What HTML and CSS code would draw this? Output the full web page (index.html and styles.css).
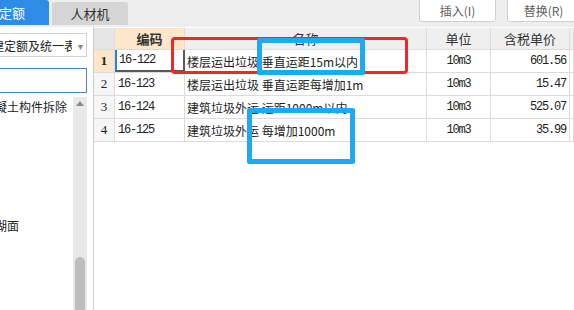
FILE: index.html
```html
<!DOCTYPE html>
<html lang="zh-CN">
<head>
    <meta charset="UTF-8">
    <link rel="stylesheet" href="styles.css">
    <title>定额</title>
</head>
<body>
    <!-- 顶部页签与按钮 -->
    <header class="topbar">
        <div class="tabs">
            <div class="tab tab-active">定额</div>
            <div class="tab">人材机</div>
        </div>
        <div class="actions">
            <button class="btn btn-insert">插入(I)</button>
            <button class="btn btn-replace">替换(R)</button>
        </div>
    </header>

    <div class="content">
        <!-- 左侧定额库 -->
        <aside class="left">
            <div class="select">
                <span class="select-text">建定额及统一表</span>
                <span class="select-arrow">&#9662;</span>
            </div>
            <div class="search"></div>
            <div class="tree">
                <div class="tree-list">
                    <div class="tree-item">混凝土构件拆除</div>
                    <div class="tree-item tree-item-far">水磨石湖面</div>
                </div>
                <div class="scrollbar">
                    <span class="scroll-up"></span>
                    <span class="scroll-thumb"></span>
                </div>
            </div>
        </aside>

        <!-- 定额列表 -->
        <main class="grid">
            <div class="row head">
                <div class="cell num"></div>
                <div class="cell code-head">编码</div>
                <div class="cell">名称</div>
                <div class="cell">单位</div>
                <div class="cell">含税单价</div>
                <div class="cell"></div>
            </div>
            <div class="row current">
                <div class="cell num">1</div>
                <div class="cell code focus">16-122</div>
                <div class="cell name">楼层运出垃圾 垂直运距15m以内</div>
                <div class="cell unit">10m3</div>
                <div class="cell price">601.56</div>
                <div class="cell"></div>
            </div>
            <div class="row">
                <div class="cell num">2</div>
                <div class="cell code">16-123</div>
                <div class="cell name">楼层运出垃圾 垂直运距每增加1m</div>
                <div class="cell unit">10m3</div>
                <div class="cell price">15.47</div>
                <div class="cell"></div>
            </div>
            <div class="row">
                <div class="cell num">3</div>
                <div class="cell code">16-124</div>
                <div class="cell name">建筑垃圾外运 运距1000m以内</div>
                <div class="cell unit">10m3</div>
                <div class="cell price">525.07</div>
                <div class="cell"></div>
            </div>
            <div class="row">
                <div class="cell num">4</div>
                <div class="cell code">16-125</div>
                <div class="cell name">建筑垃圾外运 每增加1000m</div>
                <div class="cell unit">10m3</div>
                <div class="cell price">35.99</div>
                <div class="cell"></div>
            </div>
        </main>
    </div>

    <!-- 标注框 -->
    <div class="mark mark-red"></div>
    <div class="mark mark-blue mark-blue-1"></div>
    <div class="mark mark-blue mark-blue-2"></div>
</body>
</html>
```

FILE: styles.css
```css
/* =======================
   General
======================= */
body {
    margin: 0;
    width: 574px;
    height: 310px;
    overflow: hidden;
    position: relative;
    background: #ffffff;
    font-family: "Noto Sans CJK SC", "Liberation Sans", sans-serif;
    font-size: 12px;
    color: #222;
}

/* =======================
   Top bar
======================= */
.topbar {
    height: 27px;
    background: #eeeeee;
    display: flex;
    justify-content: space-between;
}

.tabs {
    display: flex;
    gap: 3px;
    align-items: flex-end;
    height: 25px;
}

.tab {
    height: 23px;
    width: 76px;
    background: #d5d5d5;
    border-radius: 3px 3px 0 0;
    display: flex;
    align-items: center;
    justify-content: center;
    font-size: 13px;
    color: #333;
}

.tab-active {
    height: 25px;
    width: 49px;
    background: #2f8ce6;
    color: #ffffff;
    justify-content: flex-start;
    text-indent: -1px;
    border-radius: 0 3px 0 0;
}

.actions {
    display: flex;
    gap: 11px;
    margin-right: -6px;
}

.btn {
    margin-top: -3px;
    height: 25px;
    width: 77px;
    background: #ffffff;
    border: 1px solid #cfcfcf;
    border-radius: 3px;
    font-family: "Noto Sans CJK SC", "Liberation Sans", sans-serif;
    font-size: 12px;
    color: #5e5e5e;
    padding: 2px 0 0;
}

.btn-replace {
    width: 73px;
}

/* =======================
   Content
======================= */
.content {
    display: flex;
    height: 283px;
}

.left {
    width: 93px;
    flex: none;
    border-right: 1px solid #cccccc;
    overflow: hidden;
    background: #ffffff;
}

.select {
    margin: 6px 0 0 -4px;
    width: 89px;
    height: 22px;
    border: 1px solid #d2d2d2;
    display: flex;
    align-items: center;
    justify-content: space-between;
    overflow: hidden;
}

.select-text {
    white-space: nowrap;
    overflow: hidden;
    width: 75px;
    text-indent: -5px;
}

.select-arrow {
    color: #888;
    font-size: 10px;
    width: 12px;
    text-align: center;
}

.search {
    margin: 11px 0 0 -4px;
    width: 89px;
    height: 23px;
    border: 1px solid #4a86cf;
}

.tree {
    margin-top: 4px;
    display: flex;
    height: 213px;
}

.tree-list {
    width: 73px;
    overflow: hidden;
    padding-top: 2px;
}

.tree-item {
    white-space: nowrap;
    margin-left: -17px;
    height: 16px;
    line-height: 16px;
    color: #222;
}

.tree-item-far {
    margin-top: 103px;
    margin-left: -41px;
}

.scrollbar {
    width: 14px;
    background: #e8e8e8;
    display: flex;
    flex-direction: column;
    align-items: center;
    justify-content: space-between;
}

.scroll-up {
    margin-top: 4px;
    width: 0;
    height: 0;
    border-left: 4px solid transparent;
    border-right: 4px solid transparent;
    border-bottom: 5px solid #8a8a8a;
}

.scroll-thumb {
    width: 10px;
    height: 53px;
    background: #bdbdbd;
    border-radius: 5px 5px 0 0;
}

/* =======================
   Grid
======================= */
.grid {
    flex: 1;
    padding-top: 1px;
    background: #ffffff;
}

.row {
    display: grid;
    grid-template-columns: 21px 70px 242px 64px 79px 1fr;
    height: 23px;
    border-bottom: 1px solid #dcdcdc;
    box-sizing: border-box;
}

.cell {
    border-right: 1px solid #dcdcdc;
    display: flex;
    align-items: center;
    white-space: nowrap;
    overflow: hidden;
}

.head {
    height: 22px;
    background: #efefef;
    font-size: 13px;
    color: #333;
}

.head .cell {
    justify-content: center;
}

.head .num {
    background: #e6e6e6;
}

.code-head {
    background: #fde6c9;
    font-weight: bold;
}

.num {
    justify-content: center;
    background: #f6f6f6;
    font-family: "Liberation Serif", serif;
    font-size: 13px;
}

.current .num {
    background: #fde6c9;
    font-weight: bold;
}

.code,
.unit,
.price {
    font-family: "Liberation Mono", monospace;
    font-size: 12px;
    letter-spacing: -1.2px;
}

.code {
    padding-left: 3px;
}

.focus {
    border-left: 2px solid #2f7fe0;
    border-right: 2px solid #5a5a5a;
    border-bottom: 2px solid #5a5a5a;
    padding-left: 2px;
}

.name {
    padding-left: 2px;
    font-size: 12px;
}

.unit {
    justify-content: center;
}

.price {
    justify-content: flex-end;
    padding-right: 3px;
}

/* =======================
   Annotation boxes
======================= */
.mark {
    position: absolute;
    box-sizing: border-box;
}

.mark-red {
    left: 171px;
    top: 37px;
    width: 237px;
    height: 37px;
    border: 3px solid #f0262b;
    border-radius: 4px;
}

.mark-blue {
    border: 5px solid #1fa9f2;
    border-radius: 2px;
}

.mark-blue-1 {
    left: 257px;
    top: 38px;
    width: 108px;
    height: 37px;
}

.mark-blue-2 {
    left: 247px;
    top: 108px;
    width: 108px;
    height: 56px;
}
```
